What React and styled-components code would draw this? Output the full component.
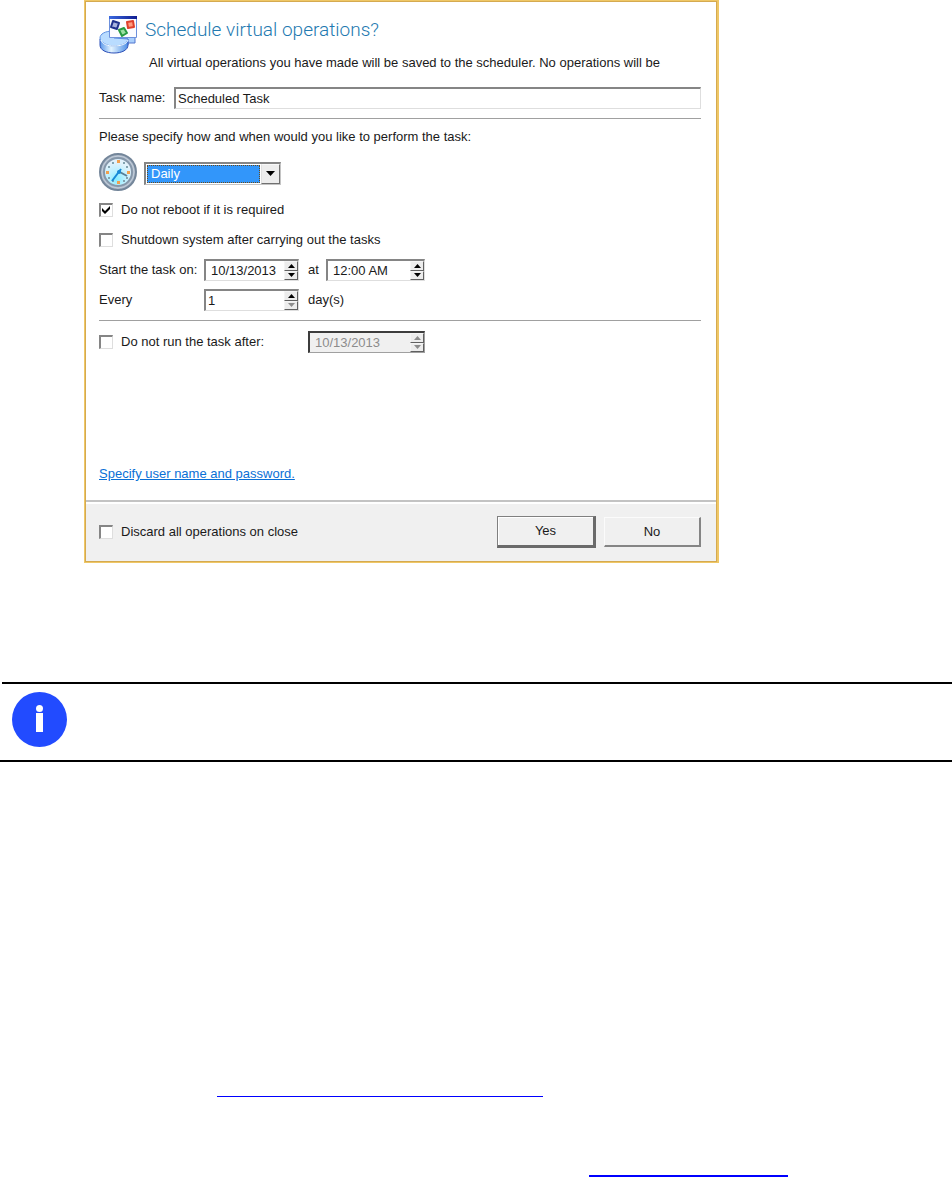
import React, { useState } from 'react';
import styled, { createGlobalStyle } from 'styled-components';

const GlobalStyle = createGlobalStyle`
  *, *::before, *::after {
    box-sizing: border-box;
  }

  body {
    margin: 0;
    background: #fff;
    color: #1a1a1a;
    font: 13px/16px "Liberation Sans", Arial, sans-serif;
  }

  button, input, select {
    font: inherit;
    color: inherit;
  }
`;

const Page = styled.main`
  display: flex;
  flex-direction: column;
`;

const Dialog = styled.form`
  display: flex;
  flex-direction: column;
  width: calc(100% - 84px);
  max-width: 635px;
  margin-left: 84px;
  border: 1px solid #efc766;
  border-width: 1px 2px 1px 1px;
`;

const Frame = styled.div`
  display: flex;
  flex-direction: column;
  border: 1px solid #d5aa50;
`;

const Body = styled.div`
  display: flex;
  flex-direction: column;
  min-height: 498px;
  padding: 13px 15px 18px 13px;
`;

const Header = styled.div`
  display: flex;
  gap: 6px;
`;

const HeaderText = styled.div`
  display: flex;
  flex-direction: column;
  flex: 1;
`;

const Title = styled.h1`
  margin: 0;
  color: #2379b0;
  font: 300 19px/30px Roboto, "Liberation Sans", sans-serif;
`;

const Description = styled.p`
  margin: 10px 0 0 4px;
`;

const Row = styled.div`
  display: flex;
  align-items: center;
  min-height: 22px;
  margin-top: ${props => props.$top || 8}px;
`;

const Line = styled.hr`
  width: 100%;
  height: 1px;
  margin: 9px 0 0;
  border: 0;
  background: #a0a0a0;
`;

const FieldLabel = styled.label`
  flex: none;
  width: ${props => props.$width}px;
`;

const Note = styled.p`
  margin: 10px 0 0;
`;

const Sunken = styled.div`
  display: flex;
  flex: ${props => (props.$width ? 'none' : '1')};
  width: ${props => (props.$width ? `${props.$width}px` : 'auto')};
  height: 22px;
  border: 2px solid;
  border-right-width: 1px;
  border-bottom-width: 1px;
  border-color: ${props => (props.$disabled ? '#3c3c3c #a0a0a0 #a0a0a0 #3c3c3c' : '#858585 #dedede #dedede #858585')};
  background: ${props => (props.$disabled ? '#f0f0f0' : '#fff')};
`;

const TextInput = styled.input`
  flex: 1;
  width: 100%;
  min-width: 0;
  padding: 0 0 0 ${props => props.$pad || 2}px;
  border: 0;
  outline: 0;
  background: transparent;

  &:disabled {
    color: #8c8c8c;
  }
`;

const Spin = styled.div`
  display: flex;
  flex: none;
  flex-direction: column;
  width: 14px;
`;

const SpinButton = styled.button`
  display: flex;
  flex: 1;
  align-items: center;
  justify-content: center;
  min-height: 0;
  padding: 0;
  border: 1px solid;
  border-color: #f4f4f4 #606060 #606060 #f4f4f4;
  background: #ececec;
`;

const SelectBox = styled.div`
  display: flex;
  width: 137px;
  height: 23px;
  margin-left: 5px;
  border: 2px solid;
  border-right-width: 1px;
  border-bottom-width: 1px;
  border-color: #858585 #c4c4c4 #c4c4c4 #858585;
`;

const Select = styled.select`
  flex: 1;
  appearance: none;
  margin: 1px;
  padding: 0 3px;
  border: 1px dotted #6b4a18;
  border-radius: 0;
  outline: 0;
  background: #3296fa;
  color: #fff;
  line-height: 15px;
`;

const SelectArrow = styled.span`
  display: flex;
  align-items: center;
  justify-content: center;
  width: 19px;
  border: 1px solid;
  border-color: #f8f8f8 #707070 #707070 #e0e0e0;
  background: #ededed;
  pointer-events: none;
`;

const CheckLabel = styled.label`
  display: flex;
  align-items: center;
  gap: 8px;
`;

const CheckCell = styled.span`
  display: grid;
  width: 14px;
  height: 14px;

  & > * {
    grid-area: 1 / 1;
  }
`;

const CheckInput = styled.input`
  appearance: none;
  width: 14px;
  height: 14px;
  margin: 0;
  border: 2px solid;
  border-right-width: 1px;
  border-bottom-width: 1px;
  border-color: #858585 #dedede #dedede #858585;
  background: #fff;
`;

const Tick = styled.svg`
  width: 14px;
  height: 14px;
  pointer-events: none;
`;

const WideLabel = styled.div`
  width: 209px;
`;

const Between = styled.span`
  width: ${props => props.$width || 27}px;
  padding-left: 9px;
`;

const AccountLink = styled.a`
  align-self: flex-start;
  margin-top: auto;
  color: #0a6fd6;
`;

const FooterRule = styled.div`
  height: 2px;
  background: #c3c3c3;
`;

const Footer = styled.div`
  display: flex;
  align-items: center;
  justify-content: space-between;
  padding: 12px 15px 13px 13px;
  border-top: 2px solid #fff;
  background: #f0f0f0;
`;

const Buttons = styled.div`
  display: flex;
  align-items: center;
  gap: 8px;
`;

const DialogButton = styled.button`
  width: ${props => (props.$primary ? 99 : 97)}px;
  height: ${props => (props.$primary ? 32 : 30)}px;
  padding: 0;
  border: solid;
  border-width: ${props => (props.$primary ? '1px 3px 3px 1px' : '1px 2px 2px 1px')};
  border-color: ${props => (props.$primary ? '#808080 #6a6a6a #6a6a6a #808080' : '#fbfbfb #858585 #858585 #fbfbfb')};
  background: #f0f0f0;
  box-shadow: ${props => (props.$primary ? 'inset 1px 1px #fff' : 'none')};
`;

const InfoNote = styled.aside`
  display: flex;
  align-items: flex-start;
  height: 80px;
  margin-top: 119px;
  padding: 10px 12px;
  border-bottom: 2px solid #000;
  background: linear-gradient(#000, #000) 2px 0 / 100% 2px no-repeat;
`;

const References = styled.nav`
  display: flex;
  flex-direction: column;
  margin-top: 319px;
`;

const ReferenceLink = styled.a`
  display: block;
  width: ${props => props.$width}px;
  height: 16px;
  margin-left: ${props => props.$left}px;
  margin-top: ${props => props.$top}px;
  border-bottom: ${props => props.$line}px solid #0000ff;
`;

const OperationsIcon = () => (
  <svg width="40" height="40" viewBox="0 0 40 40" aria-hidden="true">
    <defs>
      <linearGradient id="disk" x1="0" x2="1">
        <stop offset="0" stopColor="#5a98ea" />
        <stop offset="0.4" stopColor="#e4f4ff" />
        <stop offset="1" stopColor="#4f90e6" />
      </linearGradient>
      <linearGradient id="bar" x1="0" x2="1">
        <stop offset="0" stopColor="#3b6ae0" />
        <stop offset="1" stopColor="#101c90" />
      </linearGradient>
    </defs>
    <path d="M20 21h16v7h-7v2h-9z" fill="#a9cffc" stroke="#5276cf" />
    <path d="M1 24v6c0 5 6 8 14 8s14-3 14-8v-6z" fill="url(#disk)" stroke="#2d50b8" />
    <path d="M14 16C6 16 1 19 1 23s6 8 14 8 14-3 14-7l-14-1z" fill="#b9dcff" stroke="#5c90e2" />
    <path d="M2 25c1 4 6 6 13 6s13-2 14-6" fill="none" stroke="#f4fbff" />
    <path d="M10.500 2.500h27v20h-27z" fill="#fbfcff" stroke="#6c90dc" />
    <path d="M10 1h28v3H10z" fill="url(#bar)" />
    <g strokeWidth="2" strokeLinejoin="round">
      <path d="M14 6l6 2-2 6-6-2z" fill="#a9b4de" stroke="#20338c" />
      <path d="M28 7l6-1 1 6-6 1z" fill="#ff9c80" stroke="#e0402c" />
      <path d="M20 15l5-2 3 5-5 3z" fill="#9be0a2" stroke="#269a43" />
    </g>
  </svg>
);

const ClockIcon = () => (
  <svg width="40" height="40" viewBox="0 0 40 40" aria-hidden="true">
    <defs>
      <radialGradient id="face" cx="0.45" cy="0.75" r="0.6">
        <stop offset="0" stopColor="#86ecff" />
        <stop offset="0.5" stopColor="#bcf0ff" />
        <stop offset="1" stopColor="#e2f2fc" />
      </radialGradient>
    </defs>
    <circle cx="19" cy="19" r="18" fill="#a9b6c6" stroke="#74869a" strokeWidth="2" />
    <circle cx="19" cy="19" r="16" fill="none" stroke="#c4cedb" />
    <circle cx="19" cy="19" r="14" fill="url(#face)" stroke="#8597aa" strokeWidth="2" />
    <g fill="#f2a04e">
      <path d="M18 7h3v3h-3zM28 18h3v3h-3zM18 28h3v3h-3zM7 18h3v3H7z" />
    </g>
    <g fill="#82a3b0">
      <path d="M13 9h2v2h-2zM24 9h2v2h-2zM27 13h2v2h-2zM27 24h2v2h-2zM24 27h2v2h-2zM13 27h2v2h-2zM9 24h2v2H9zM9 13h2v2H9z" />
    </g>
    <path d="M19 18l9 5" stroke="#557f99" strokeWidth="2" />
    <path d="M22 16l-9 12" stroke="#1689d6" strokeWidth="2" />
    <circle cx="20" cy="19" r="2" fill="#1689d6" />
  </svg>
);

const InfoIcon = () => (
  <svg width="55" height="55" viewBox="0 0 55 55" role="img" aria-label="Information">
    <circle cx="27.500" cy="27.500" r="27.500" fill="#224bff" />
    <circle cx="27.500" cy="16.500" r="3.500" fill="#fff" />
    <path d="M24 21h7v19h-7z" fill="#fff" />
  </svg>
);

const Arrow = ({ down, muted }) => (
  <svg width="7" height="4" viewBox="0 0 7 4" aria-hidden="true">
    <path d={down ? 'M0 0h7L3.500 4z' : 'M0 4h7L3.500 0z'} fill={muted ? '#8c8c8c' : '#000'} />
  </svg>
);

const SelectChevron = () => (
  <svg width="9" height="5" viewBox="0 0 9 5" aria-hidden="true">
    <path d="M0 0h9L4.500 5z" fill="#000" />
  </svg>
);

const SpinField = ({ id, label, value, width, pad, disabled, muteDown }) => {
  const [text, setText] = useState(value);

  return (
    <Sunken $width={width} $disabled={disabled}>
      <TextInput
        id={id}
        aria-label={label}
        value={text}
        onChange={(e) => setText(e.target.value)}
        disabled={disabled}
        $pad={pad}
      />
      <Spin>
        <SpinButton type="button" aria-label="Increase" disabled={disabled}>
          <Arrow muted={disabled} />
        </SpinButton>
        <SpinButton type="button" aria-label="Decrease" disabled={disabled}>
          <Arrow down muted={disabled || muteDown} />
        </SpinButton>
      </Spin>
    </Sunken>
  );
};

const CheckField = ({ children, defaultChecked = false }) => {
  const [checked, setChecked] = useState(defaultChecked);

  return (
    <CheckLabel>
      <CheckCell>
        <CheckInput type="checkbox" checked={checked} onChange={(e) => setChecked(e.target.checked)} />
        {checked && (
          <Tick viewBox="0 0 14 14" aria-hidden="true">
            <path d="M3 5l3 3 5-5v3l-5 5-3-3z" fill="#000" />
          </Tick>
        )}
      </CheckCell>
      {children}
    </CheckLabel>
  );
};

const App = () => {
  const [taskName, setTaskName] = useState('Scheduled Task');

  return (
    <Page>
      <GlobalStyle />
      <Dialog onSubmit={(e) => e.preventDefault()}>
        <Frame>
          <Body>
            <Header>
              <OperationsIcon />
              <HeaderText>
                <Title>Schedule virtual operations?</Title>
                <Description>
                  All virtual operations you have made will be saved to the scheduler. No operations will be
                </Description>
              </HeaderText>
            </Header>

            <Row $top={16}>
              <FieldLabel htmlFor="task-name" $width={75}>Task name:</FieldLabel>
              <Sunken>
                <TextInput id="task-name" value={taskName} onChange={(e) => setTaskName(e.target.value)} />
              </Sunken>
            </Row>
            <Line />

            <Note>Please specify how and when would you like to perform the task:</Note>
            <Row>
              <ClockIcon />
              <SelectBox>
                <Select aria-label="Frequency" defaultValue="Daily">
                  <option>Daily</option>
                </Select>
                <SelectArrow><SelectChevron /></SelectArrow>
              </SelectBox>
            </Row>
            <Row $top={6}><CheckField defaultChecked>Do not reboot if it is required</CheckField></Row>
            <Row><CheckField>Shutdown system after carrying out the tasks</CheckField></Row>
            <Row>
              <FieldLabel htmlFor="start-date" $width={105}>Start the task on:</FieldLabel>
              <SpinField id="start-date" value="10/13/2013" width={95} pad={5} />
              <Between>at</Between>
              <SpinField label="Start time" value="12:00 AM" width={99} pad={5} />
            </Row>
            <Row>
              <FieldLabel htmlFor="every" $width={105}>Every</FieldLabel>
              <SpinField id="every" value="1" width={95} muteDown />
              <Between $width={60}>day(s)</Between>
            </Row>
            <Line />

            <Row $top={10}>
              <WideLabel><CheckField>Do not run the task after:</CheckField></WideLabel>
              <SpinField label="End date" value="10/13/2013" width={117} pad={5} disabled />
            </Row>
            <AccountLink href="#account">Specify user name and password.</AccountLink>
          </Body>
          <FooterRule />
          <Footer>
            <CheckField>Discard all operations on close</CheckField>
            <Buttons>
              <DialogButton type="submit" $primary>Yes</DialogButton>
              <DialogButton type="button">No</DialogButton>
            </Buttons>
          </Footer>
        </Frame>
      </Dialog>

      <InfoNote><InfoIcon /></InfoNote>

      <References>
        <ReferenceLink href="#scheduler" aria-label="Scheduler" $width={326} $left={217} $top={0} $line={1} />
        <ReferenceLink href="#operations" aria-label="Operations" $width={199} $left={589} $top={64} $line={2} />
      </References>
    </Page>
  );
};

export default App;
